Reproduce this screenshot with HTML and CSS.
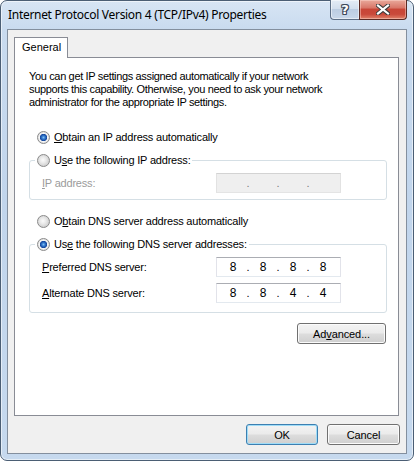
FILE: index.html
```html
<!DOCTYPE html>
<html>
<head>
<meta charset="utf-8">
<link rel="stylesheet" href="styles.css">
</head>
<body>
<div class="window">
  <div class="titlebar">
    <div class="title">Internet Protocol Version 4 (TCP/IPv4) Properties</div>
    <div class="caption-buttons">
      <div class="cap-btn help"><span class="q">?</span></div>
      <div class="cap-btn close">
        <svg width="14" height="11" viewBox="0 0 14 11">
          <path d="M2 1.5 L12 9.5 M12 1.5 L2 9.5" stroke="#3a3a3a" stroke-width="4.2" stroke-linecap="square"/>
          <path d="M2 1.5 L12 9.5 M12 1.5 L2 9.5" stroke="#ffffff" stroke-width="2.2" stroke-linecap="square"/>
        </svg>
      </div>
    </div>
  </div>
  <div class="client">
    <div class="tabs"><div class="tab">General</div></div>
    <div class="panel">
      <p class="intro">You can get IP settings assigned automatically if your network<br>supports this capability. Otherwise, you need to ask your network<br>administrator for the appropriate IP settings.</p>

      <div class="radio-row first"><span class="radio checked"></span><span><u>O</u>btain an IP address automatically</span></div>

      <div class="group g1">
        <div class="legend"><span class="radio"></span><span>U<u>s</u>e the following IP address:</span></div>
        <div class="field-row disabled">
          <span class="label"><u>I</u>P address:</span>
          <div class="ipbox off"><span class="oct"></span><span class="dot">.</span><span class="oct"></span><span class="dot">.</span><span class="oct"></span><span class="dot">.</span><span class="oct"></span></div>
        </div>
      </div>

      <div class="radio-row dns"><span class="radio"></span><span>O<u>b</u>tain DNS server address automatically</span></div>

      <div class="group g2">
        <div class="legend"><span class="radio checked"></span><span>Us<u>e</u> the following DNS server addresses:</span></div>
        <div class="field-row">
          <span class="label"><u>P</u>referred DNS server:</span>
          <div class="ipbox"><span class="oct">8</span><span class="dot">.</span><span class="oct">8</span><span class="dot">.</span><span class="oct">8</span><span class="dot">.</span><span class="oct">8</span></div>
        </div>
        <div class="field-row second">
          <span class="label"><u>A</u>lternate DNS server:</span>
          <div class="ipbox"><span class="oct">8</span><span class="dot">.</span><span class="oct">8</span><span class="dot">.</span><span class="oct">4</span><span class="dot">.</span><span class="oct">4</span></div>
        </div>
      </div>

      <div class="adv-row"><button class="btn adv">Ad<u>v</u>anced...</button></div>
    </div>
    <div class="dialog-buttons">
      <button class="btn ok default">OK</button>
      <button class="btn cancel">Cancel</button>
    </div>
  </div>
</div>
</body>
</html>
```
FILE: styles.css
```css
html, body {
  margin: 0;
  padding: 0;
  background: #ffffff;
}
body {
  width: 414px;
  height: 461px;
  overflow: hidden;
}
.window {
  box-sizing: border-box;
  width: 414px;
  height: 461px;
  border: 1px solid #4b5e74;
  border-radius: 7px;
  background: linear-gradient(180deg, #d7e5f4 0px, #c9dbef 28px, #c1d5ec 200px, #c6d9ee 461px);
  box-shadow: inset 0 0 0 1px rgba(255,255,255,0.55);
  padding: 0 6px 6px 6px;
  display: flex;
  flex-direction: column;
  font-family: "Liberation Sans", Arial, sans-serif;
  font-size: 11px;
  color: #000;
}
.titlebar {
  height: 28px;
  display: flex;
  align-items: flex-start;
}
.title {
  font-family: "Noto Sans", "Open Sans", sans-serif;
  font-size: 12px;
  letter-spacing: -0.3px;
  color: #000;
  padding-left: 1px;
  margin-top: 5px;
  line-height: 17px;
  flex: 1;
  white-space: nowrap;
}
.caption-buttons {
  display: flex;
  margin-right: 0px;
  margin-top: -1px;
}
.cap-btn {
  box-sizing: border-box;
  height: 20px;
  border: 1px solid #5d6f86;
  border-top: none;
  display: flex;
  align-items: center;
  justify-content: center;
}
.help {
  width: 29px;
  border-right: none;
  border-bottom-left-radius: 4px;
  background: linear-gradient(180deg, #e4ecf6 0%, #d3dfee 45%, #bccde2 50%, #c9d8ea 100%);
  box-shadow: inset 0 0 0 1px rgba(255,255,255,0.5);
}
.q {
  font-family: "DejaVu Sans", sans-serif;
  font-weight: bold;
  font-size: 13px;
  line-height: 14px;
  color: #ffffff;
  text-shadow: 1px 0 0 #3e4a5a, -1px 0 0 #3e4a5a, 0 1px 0 #3e4a5a, 0 -1px 0 #3e4a5a, 1px 1px 0 #3e4a5a, -1px -1px 0 #3e4a5a, 1px -1px 0 #3e4a5a, -1px 1px 0 #3e4a5a;
}
.close {
  width: 48px;
  border-color: #5b2a24;
  border-bottom-right-radius: 4px;
  background: linear-gradient(180deg, #e9a99b 0%, #d9786a 40%, #c84637 50%, #c9493a 75%, #e0826a 100%);
  box-shadow: inset 0 0 0 1px rgba(255,220,210,0.45);
}
.client {
  box-sizing: border-box;
  flex: 1;
  border: 1px solid #838f9e;
  background: #f0f0f0;
  padding: 7px 6px 0 6px;
  display: flex;
  flex-direction: column;
}
.tabs {
  display: flex;
  height: 20px;
  position: relative;
  z-index: 1;
}
.tab {
  box-sizing: border-box;
  width: 54px;
  height: 21px;
  border: 1px solid #898c95;
  border-bottom: none;
  background: #ffffff;
  padding-left: 7px;
  line-height: 19px;
  font-size: 11px;
}
.panel {
  box-sizing: border-box;
  height: 359px;
  margin-right: 1px;
  border: 1px solid #898c95;
  background: #ffffff;
  padding: 12px 11px 0 14px;
}
.intro {
  margin: 0;
  line-height: 13px;
  letter-spacing: -0.35px;
  white-space: nowrap;
}
.radio-row, .legend {
  display: flex;
  align-items: center;
  height: 13px;
  line-height: 13px;
  gap: 4px;
  letter-spacing: -0.2px;
}
.radio-row {
  margin-left: 8px;
}
.radio-row.first {
  margin-top: 22px;
}
.radio-row.dns {
  margin-top: 15px;
}
.radio {
  box-sizing: border-box;
  width: 13px;
  height: 13px;
  border-radius: 50%;
  border: 1px solid #8a8a8a;
  background: radial-gradient(circle at 45% 45%, #fbfbfb 0px, #e9e9e9 3px, #d2d2d2 6px);
  flex: none;
}
.radio.checked {
  background: radial-gradient(circle at 50% 50%, #7cc0f4 0px, #2f72c8 1.8px, #12449a 3.4px, #f6f6f6 3.9px, #e1e1e1 5.5px);
}
.group {
  border: 1px solid #d5dfe5;
  border-radius: 3px;
  padding: 0 12px 6px 12px;
}
.g1 {
  margin-top: 16px;
}
.g2 {
  margin-top: 16px;
  padding-bottom: 9px;
}
.legend {
  margin-top: -7px;
  margin-left: -7px;
  padding: 0 2px;
  background: #ffffff;
  align-self: flex-start;
  width: max-content;
}
.field-row {
  display: flex;
  align-items: center;
  margin-top: 6px;
  letter-spacing: -0.2px;
}
.field-row.disabled .label {
  color: #9b9b9b;
}
.label {
  width: 174px;
  flex: none;
}
.ipbox {
  box-sizing: border-box;
  width: 125px;
  height: 20px;
  border: 1px solid;
  border-color: #abadb3 #e2e3ea #e3e9ef #e2e3ea;
  background: #ffffff;
  display: flex;
  align-items: center;
  padding-left: 4px;
  font-size: 12px;
  letter-spacing: 0;
}
.ipbox.off {
  background: #efefef;
  border-color: #d3d3d3 #e2e2e2 #e4e4e4 #e2e2e2;
  color: #7a7a7a;
}
.oct {
  width: 24px;
  text-align: center;
}
.dot {
  width: 6px;
  text-align: center;
  font-size: 11px;
}
.adv-row {
  display: flex;
  justify-content: flex-end;
  margin-top: 10px;
  padding-right: 1px;
}
.btn {
  box-sizing: border-box;
  height: 21px;
  border: 1px solid #707070;
  border-radius: 3px;
  background: linear-gradient(180deg, #f3f3f3 0%, #ebebeb 48%, #dddddd 52%, #cfcfcf 100%);
  box-shadow: inset 0 0 0 1px #fbfbfb;
  font-family: "Liberation Sans", Arial, sans-serif;
  font-size: 11px;
  color: #000;
  padding: 0;
  margin: 0;
  line-height: 18px;
  letter-spacing: -0.1px;
}
.adv {
  width: 89px;
}
.dialog-buttons {
  display: flex;
  justify-content: flex-end;
  gap: 9px;
  margin-top: 8px;
  padding-right: 0px;
}
.ok {
  width: 72px;
}
.cancel {
  width: 73px;
}
.btn.default {
  border-color: #3c7fb1;
  box-shadow: inset 0 0 0 1px #9fdcf7;
}
u {
  text-decoration: underline;
  text-underline-offset: 1px;
}
```
